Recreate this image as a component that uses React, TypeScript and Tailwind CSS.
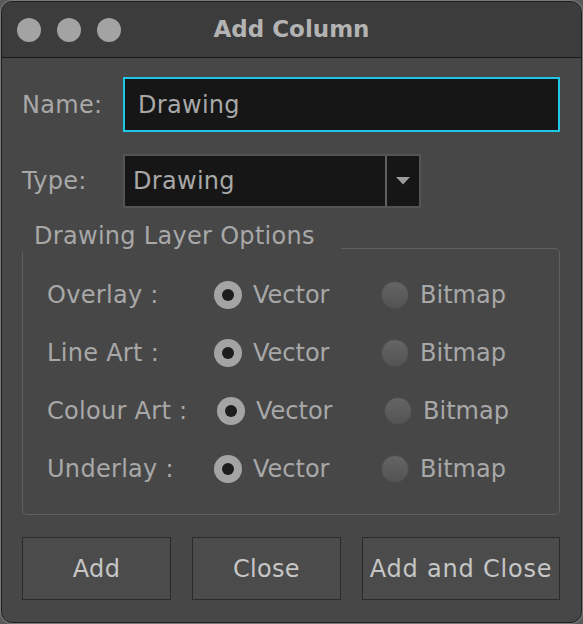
import React from 'react'

const rows = [
  { label: 'Overlay :', labelW: 'w-[167px]' },
  { label: 'Line Art :', labelW: 'w-[167px]' },
  { label: 'Colour Art :', labelW: 'w-[170px]' },
  { label: 'Underlay :', labelW: 'w-[167px]' },
]

function Radio({ checked }: { checked: boolean }) {
  if (checked) {
    return (
      <span className="flex h-[28px] w-[28px] shrink-0 items-center justify-center rounded-full bg-[#a4a4a4]">
        <span className="h-[12px] w-[12px] rounded-full bg-[#1d1d1d]" />
      </span>
    )
  }
  return (
    <span className="h-[28px] w-[28px] shrink-0 rounded-full border border-[#4e4e4e] bg-gradient-to-b from-[#656565] to-[#535353]" />
  )
}

export default function App() {
  return (
    <div className="h-[624px] w-[583px] bg-[#5a5a5a] font-['DejaVu_Sans',sans-serif]">
      <div className="h-full rounded-[12px] bg-[#7a7a7a] p-px">
        <div className="flex h-full flex-col overflow-hidden rounded-[11px] border border-[#1e1e1e] bg-[#474747]">
          {/* Title bar */}
          <div className="flex h-[56px] shrink-0 items-center border-b border-[#1a1a1a] bg-[#3c3c3c]">
            <div className="flex w-[130px] gap-[16px] pl-[15px]">
              <span className="h-[24px] w-[24px] rounded-full bg-[#a3a3a3]" />
              <span className="h-[24px] w-[24px] rounded-full bg-[#a3a3a3]" />
              <span className="h-[24px] w-[24px] rounded-full bg-[#a3a3a3]" />
            </div>
            <div className="flex-1 text-center text-[23px] font-bold text-[#b3b3b3]">Add Column</div>
            <div className="w-[130px]" />
          </div>

          {/* Body */}
          <div className="flex flex-col pl-[20px] pr-[21px] text-[24px] tracking-[0.3px] text-[#a8a8a8]">
            <div className="mt-[19px] flex items-center">
              <span className="w-[101px] shrink-0">Name:</span>
              <div className="flex h-[55px] flex-1 items-center border-2 border-[#1fc6e6] bg-[#161616] pl-[13px] text-[#a8a8a8]">
                Drawing
              </div>
            </div>

            <div className="mt-[22px] flex items-center">
              <span className="w-[101px] shrink-0">Type:</span>
              <div className="flex h-[54px] w-[298px] border-2 border-[#545454] bg-[#161616]">
                <div className="flex flex-1 items-center pl-[8px]">Drawing</div>
                <div className="flex w-[34px] items-center justify-center border-l-2 border-[#606060]">
                  <svg width="14" height="8" viewBox="0 0 14 8">
                    <path d="M0 0 H14 L7 7.5 Z" fill="#9c9c9c" />
                  </svg>
                </div>
              </div>
            </div>

            <fieldset className="mt-[16px] rounded-[5px] border border-[#606060] pb-[22px]">
              <legend className="pl-[11px] pr-[26px] pb-[24px] leading-[24px]">Drawing Layer Options</legend>
              <div className="flex flex-col gap-[12px] pl-[24px]">
                {rows.map((r) => (
                  <div key={r.label} className="flex h-[46px] items-center">
                    <span className={`${r.labelW} shrink-0`}>{r.label}</span>
                    <div className="flex w-[167px] items-center gap-[11px]">
                      <Radio checked />
                      <span className="tracking-normal">Vector</span>
                    </div>
                    <div className="flex items-center gap-[11px]">
                      <Radio checked={false} />
                      <span className="tracking-normal">Bitmap</span>
                    </div>
                  </div>
                ))}
              </div>
            </fieldset>

            <div className="mt-[22px] flex gap-[21px] text-[#c6c6c6]">
              <button className="flex h-[63px] w-[149px] items-center justify-center border border-[#2a2a2a] bg-[#4b4b4b]">
                Add
              </button>
              <button className="flex h-[63px] w-[149px] items-center justify-center border border-[#2a2a2a] bg-[#4b4b4b]">
                Close
              </button>
              <button className="flex h-[63px] flex-1 items-center justify-center border border-[#2a2a2a] bg-[#4b4b4b] tracking-[0.8px]">
                Add and Close
              </button>
            </div>
          </div>
        </div>
      </div>
    </div>
  )
}
